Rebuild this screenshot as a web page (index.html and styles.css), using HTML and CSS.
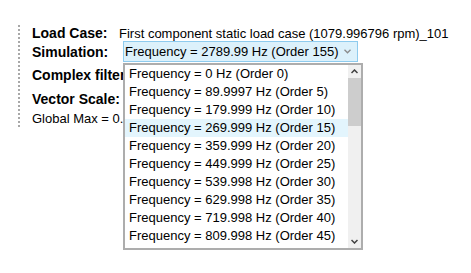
FILE: index.html
```html
<!DOCTYPE html>
<html>
<head>
<meta charset="utf-8">
<link rel="stylesheet" href="styles.css">
</head>
<body>
<div class="panel">
  <div class="row r1">
    <span class="label">Load Case:</span>
    <span class="value">First component static load case (1079.996796 rpm)_101</span>
  </div>
  <div class="row r2">
    <span class="label">Simulation:</span>
    <div class="select">
      <span class="sel-text">Frequency = 2789.99 Hz (Order 155)</span>
      <svg class="sel-arrow" width="7" height="5" viewBox="0 0 7 5"><path d="M0.5 0.8 L3.5 3.8 L6.5 0.8" fill="none" stroke="#8a8a8a" stroke-width="1.3"/></svg>
    </div>
  </div>
  <div class="row r3">
    <span class="label">Complex filter:</span>
  </div>
  <div class="row r4">
    <span class="label">Vector Scale:</span>
  </div>
  <div class="row r5">
    <span class="plain">Global Max = 0.0</span>
  </div>
</div>

<div class="dropdown">
  <ul class="items">
    <li>Frequency = 0 Hz (Order 0)</li>
    <li>Frequency = 89.9997 Hz (Order 5)</li>
    <li>Frequency = 179.999 Hz (Order 10)</li>
    <li class="hover">Frequency = 269.999 Hz (Order 15)</li>
    <li>Frequency = 359.999 Hz (Order 20)</li>
    <li>Frequency = 449.999 Hz (Order 25)</li>
    <li>Frequency = 539.998 Hz (Order 30)</li>
    <li>Frequency = 629.998 Hz (Order 35)</li>
    <li>Frequency = 719.998 Hz (Order 40)</li>
    <li>Frequency = 809.998 Hz (Order 45)</li>
  </ul>
  <div class="scrollbar">
    <div class="sb-btn"><svg width="7" height="5" viewBox="0 0 7 5"><path d="M0.5 4 L3.5 1 L6.5 4" fill="none" stroke="#404040" stroke-width="1.5"/></svg></div>
    <div class="sb-thumb"></div>
    <div class="sb-track"></div>
    <div class="sb-btn"><svg width="7" height="5" viewBox="0 0 7 5"><path d="M0.5 1 L3.5 4 L6.5 1" fill="none" stroke="#404040" stroke-width="1.5"/></svg></div>
  </div>
</div>
</body>
</html>
```

FILE: styles.css
```css
html, body {
  margin: 0;
  padding: 0;
  background: #ffffff;
}
body {
  font-family: "Liberation Sans", Arial, sans-serif;
  font-size: 13px;
  color: #000;
  width: 471px;
  height: 273px;
  overflow: hidden;
  position: relative;
}
.panel {
  margin-top: 25px;
  margin-left: 18px;
  padding-left: 12px;
  border-left: 2px dotted #a8a8a8;
  display: flex;
  flex-direction: column;
  width: 420px;
}
.row {
  display: flex;
  align-items: center;
  white-space: nowrap;
}
.r1 { height: 16px; }
.r2 { height: 21px; }
.r3 { height: 25px; }
.r4 { height: 23px; }
.r5 { height: 17px; }
.label {
  font-weight: bold;
  font-size: 14px;
  width: 87px;
  flex: none;
}
.value {
  font-size: 13px;
}
.select {
  margin-left: 4px;
  width: 233px;
  height: 19px;
  border: 1px solid #8ecbee;
  background: #dcf1fb;
  display: flex;
  align-items: center;
  justify-content: space-between;
  box-sizing: content-box;
}
.sel-text {
  padding-left: 1px;
}
.sel-arrow {
  margin-right: 6px;
}
.plain {
  font-size: 13px;
}
.dropdown {
  position: absolute;
  left: 123px;
  top: 63px;
  width: 236px;
  height: 183px;
  border: 2px solid #adadad;
  background: #fff;
  display: flex;
}
.items {
  list-style: none;
  margin: 0;
  padding: 0;
  flex: 1;
}
.items li {
  height: 18px;
  line-height: 18px;
  padding-left: 4px;
  white-space: nowrap;
}
.items li.hover {
  background: #e3f5fd;
}
.scrollbar {
  width: 13px;
  flex: none;
  background: #f0f0f0;
  display: flex;
  flex-direction: column;
}
.sb-btn {
  height: 13px;
  display: flex;
  align-items: center;
  justify-content: center;
  flex: none;
}
.sb-thumb {
  height: 48px;
  background: #cdcdcd;
  flex: none;
}
.sb-track {
  flex: 1;
}
```
